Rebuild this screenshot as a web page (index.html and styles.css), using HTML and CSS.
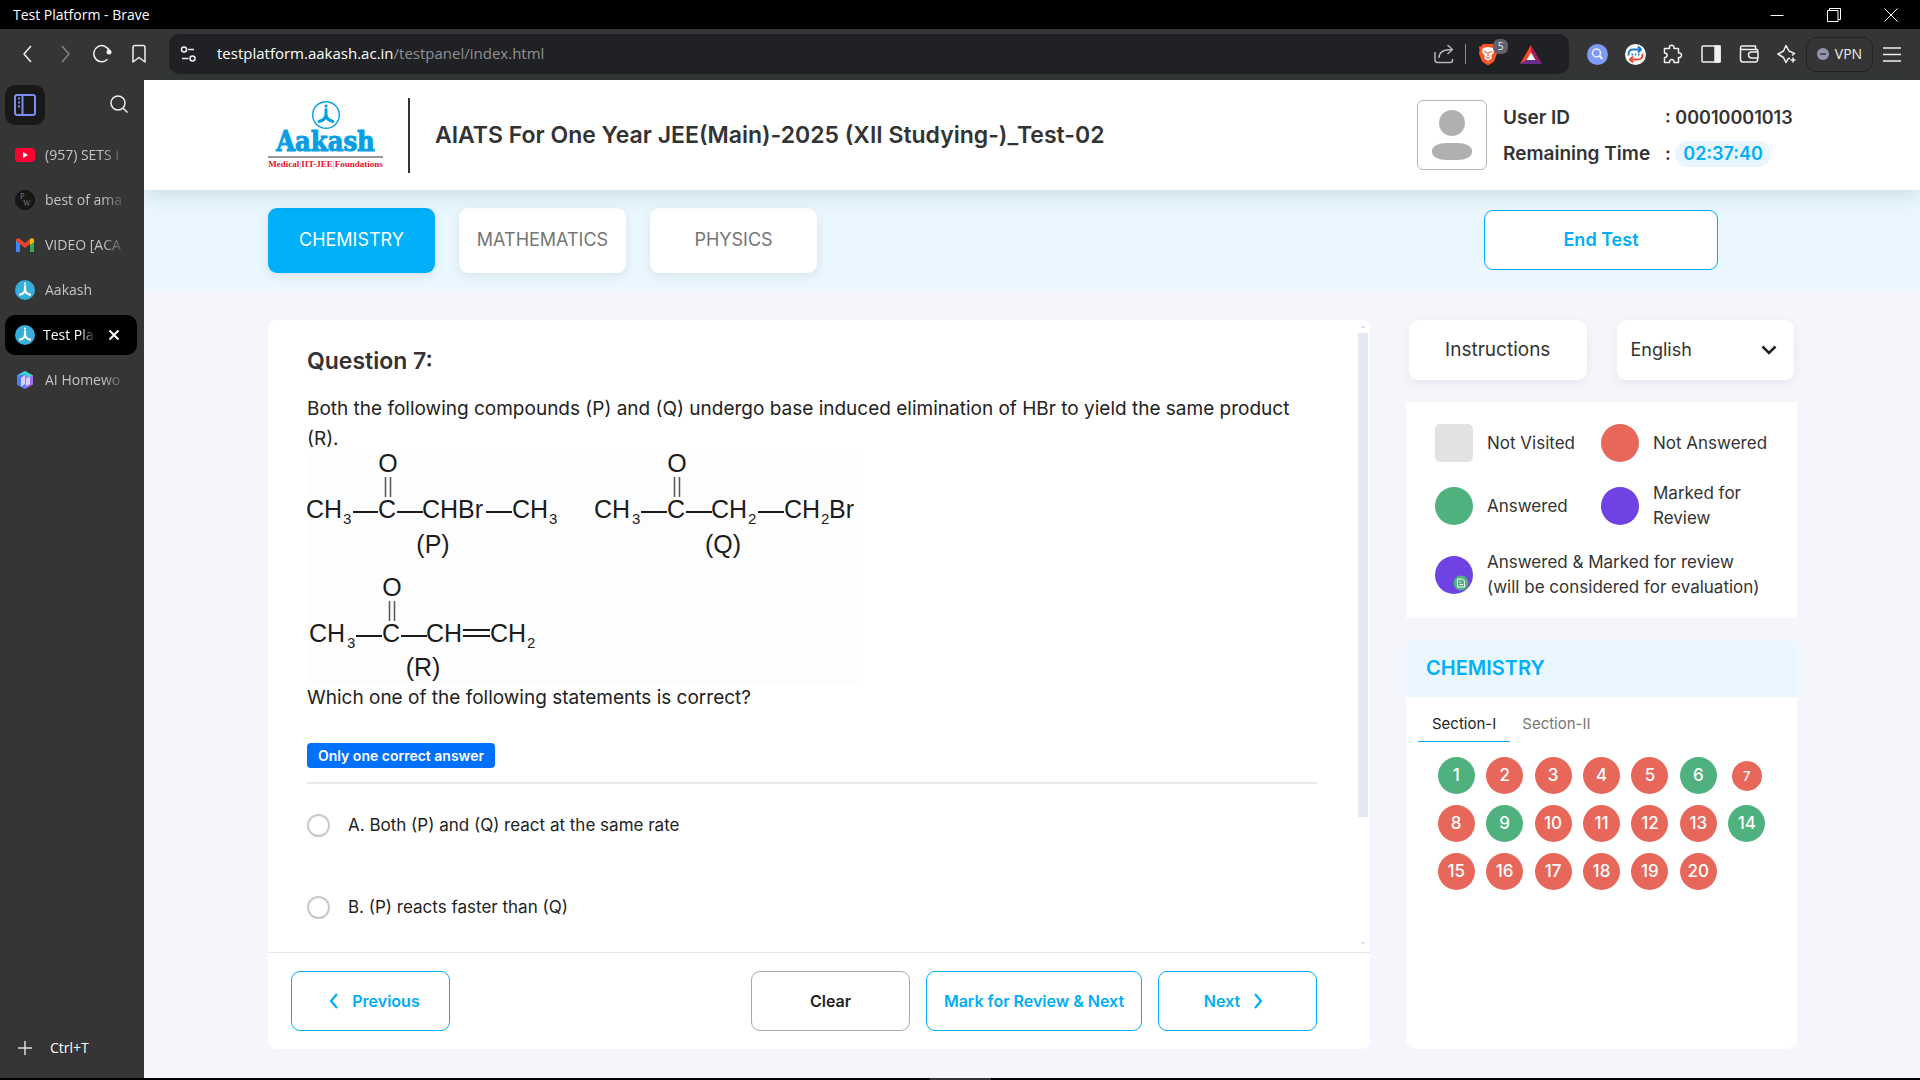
FILE: index.html
```html
<!DOCTYPE html>
<html lang="en">
<head>
<meta charset="utf-8">
<title>Test Platform</title>
<link rel="stylesheet" href="styles.css">
</head>
<body>
<svg class="defs" aria-hidden="true">
  <symbol id="figure" viewBox="0 0 28 28">
    <circle cx="14" cy="5" r="1.6" fill="currentColor"/>
    <path d="M14 8.500V14M14 13c0 4-3 6.500-7 7.500M14 13c0 4 3 6.500 7 7.500" fill="none" stroke="currentColor" stroke-width="3" stroke-linecap="round"/>
  </symbol>
</svg>

<div class="titlebar">
  <span class="window-title">Test Platform - Brave</span>
  <button class="win" aria-label="Minimize"><svg width="14" height="14" viewBox="0 0 14 14"><path d="M0.500 7.500h13"/></svg></button>
  <button class="win" aria-label="Restore"><svg width="14" height="14" viewBox="0 0 14 14"><path d="M0.500 2.500h10.500v11H0.500zM2.500 2.500v-2h11v11h-2"/></svg></button>
  <button class="win" aria-label="Close"><svg width="14" height="14" viewBox="0 0 14 14"><path d="M0.500 0.500l13 13M13.500 0.500l-13 13"/></svg></button>
</div>

<div class="toolbar">
  <div class="nav">
    <button class="tool" aria-label="Back"><svg width="20" height="20" viewBox="0 0 20 20"><path d="M13 2l-7 8 7 8"/></svg></button>
    <button class="tool dim" aria-label="Forward"><svg width="20" height="20" viewBox="0 0 20 20"><path d="M7 2l7 8-7 8"/></svg></button>
    <button class="tool" aria-label="Reload"><svg width="20" height="20" viewBox="0 0 20 20"><path d="M15.500 15.200A8 8 0 1 1 17.300 7"/><circle cx="17" cy="8" r="2.500" fill="currentColor" stroke="none"/></svg></button>
    <button class="tool" aria-label="Bookmark"><svg width="20" height="20" viewBox="0 0 20 20"><path d="M4 18V3.500C4 2 4.500 1.500 6 1.500h8c1.500 0 2 0.500 2 2V18l-6-4.500z"/></svg></button>
  </div>
  <div class="address">
    <button class="tool" aria-label="Site settings"><svg width="18" height="18" viewBox="0 0 18 18"><circle cx="5" cy="4.500" r="2.500"/><path d="M9 4.500h6M3 13.500h6.500"/><circle cx="13.500" cy="13.500" r="2.500"/></svg></button>
    <div class="url" role="textbox" aria-label="Address" contenteditable="true" spellcheck="false">testplatform.aakash.ac.in<span>/testpanel/index.html</span></div>
    <div class="address-tools">
      <button class="tool soft" aria-label="Share"><svg width="20" height="20" viewBox="0 0 20 20"><path d="M1 8v8c0 1.500 1 2.500 2.500 2.500h13c1 0 2-1 2-2V15M5 14c0-5 4-8.500 13-8.500M13.500 1l5 4.500-5 4.500"/></svg></button>
      <i class="bar"></i>
      <button class="tool shield" aria-label="Brave Shields"><svg width="20" height="23" viewBox="0 0 20 23"><path d="M5 1h10l2 2.500 2 0-0.500 4 0.500 3-3 8-6 4-6-4-3-8 0.500-3-0.500-4 2 0z" fill="#fb542b" stroke="none"/><path d="M5 5l5-1 5 1 1 4-3 4 1 2-4 3-4-3 1-2-3-4z" fill="#fff" stroke="none"/><path d="M6 8.500l3 1M14 8.500l-3 1M10 9v4M8 14l2 1 2-1" stroke="#fb542b" stroke-width="1.200"/></svg><span class="count">5</span></button>
      <button class="tool" aria-label="Rewards"><svg width="22" height="19" viewBox="0 0 22 19"><path d="M11 0L0 19l11-6z" fill="#ff4724" stroke="none"/><path d="M11 0l11 19-11-6z" fill="#9e1f63" stroke="none"/><path d="M0 19h22l-11-7z" fill="#662d91" stroke="none"/><path d="M11 7.500l4.500 7.500h-9z" fill="#fff" stroke="none"/></svg></button>
    </div>
  </div>
  <div class="extensions">
    <button class="tool" aria-label="Search extension"><svg width="21" height="21" viewBox="0 0 21 21"><circle cx="10.500" cy="10.500" r="10.500" fill="#7d9cf8" stroke="none"/><circle cx="9.500" cy="9" r="4"/><path d="M12.500 12l3 3" stroke-width="2"/></svg></button>
    <button class="tool" aria-label="Chat extension"><svg width="21" height="21" viewBox="0 0 21 21"><circle cx="10.500" cy="10.500" r="10.500" fill="#fff" stroke="none"/><path d="M3.500 11.500c-0.500-5 2-6 5-6h7M13 2.500l3 3-3 3" stroke="#1976d2" stroke-width="2"/><path d="M17.500 9.500c0.500 5-2 6-5 6h-7M8 12.500l-3 3 3 3" stroke="#f04a32" stroke-width="2"/><path d="M6.500 10.500h1.500M9.800 10.500h1.500M13 10.500h1.500" stroke="#1976d2" stroke-width="2"/></svg></button>
    <button class="tool" aria-label="Extensions"><svg width="20" height="20" viewBox="0 0 20 20"><path d="M1.500 4.500h5c-1.200-4.500 5.500-4.500 4.500 0h4.500V9c4-1 4 5.500 0 4.500v5H11c0.500-4-5-4-4.500 0h-5v-5c3.500 0 3.500-4.500 0-4.500z"/></svg></button>
    <button class="tool" aria-label="Side panel"><svg width="20" height="20" viewBox="0 0 20 20"><rect x="1" y="2" width="18" height="16" rx="1"/><path d="M14 2h5v16h-5z" fill="currentColor"/></svg></button>
    <button class="tool" aria-label="Wallet"><svg width="20" height="20" viewBox="0 0 20 20"><path d="M18.500 8V5.500H3C1 5.500 1 2 3 2h13.500v3M1.500 4v11.500c0 1.500 1 2.500 2.500 2.500h12.500c1.500 0 2-1 2-2v-2"/><path d="M19 8h-6.500a3 3 0 0 0 0 6H19z"/></svg></button>
    <button class="tool" aria-label="Leo"><svg width="20" height="20" viewBox="0 0 20 20"><path d="M13 14l-2 1-2 3.500-2.500-5L1 10l5.500-3L9 1.500 12 7l5.500 2.500-2.500 2M16 13.500v5M13.500 16h5"/></svg></button>
    <button class="vpn"><svg width="12" height="12" viewBox="0 0 12 12"><circle cx="6" cy="6" r="6" fill="#9494ac"/><path d="M3 6h6" stroke="#353535" stroke-width="1.500"/></svg>VPN</button>
    <button class="tool" aria-label="Menu"><svg width="20" height="20" viewBox="0 0 20 20"><path d="M1 4h18M1 10.500h18M1 17h18"/></svg></button>
  </div>
</div>

<div class="window">
  <nav class="tabs" aria-label="Browser tabs">
    <div class="tabs-head">
      <button class="panel" aria-label="Vertical tabs"><svg width="22" height="22" viewBox="0 0 22 22"><rect x="1" y="1" width="20" height="20" rx="2"/><path d="M8.500 1v20M4 4.500h2M4 8.500h2M4 12.500h2"/></svg></button>
      <button class="tool" aria-label="Search tabs"><svg width="18" height="18" viewBox="0 0 18 18"><circle cx="8" cy="8" r="7"/><path d="M13 13l4.500 4.500"/></svg></button>
    </div>
    <a class="tab" href="#"><svg width="20" height="20" viewBox="0 0 20 20"><rect y="3" width="20" height="14" rx="4" fill="#f03"/><path d="M8 7l5 3-5 3z" fill="#fff"/></svg><span>(957) SETS i</span></a>
    <a class="tab" href="#"><svg width="20" height="20" viewBox="0 0 20 20"><circle cx="10" cy="10" r="9.500" fill="#181818" stroke="#111"/><text x="5" y="9" class="fav">P</text><text x="8" y="16" class="fav">W</text></svg><span>best of ama</span></a>
    <a class="tab" href="#"><svg width="20" height="20" viewBox="0 0 20 20"><path d="M1 5v12h4V8z" fill="#4285f4"/><path d="M19 5v12h-4V8z" fill="#34a853"/><path d="M1 5.500c0-2.500 2-3 4-1.500l5 4 5-4v5l-5 4-5-4-4-3z" fill="#ea4335"/><path d="M15 4c2-1.500 4-1 4 1.500V7l-4 3z" fill="#fbbc04"/></svg><span>VIDEO [ACA</span></a>
    <a class="tab" href="#"><svg class="aak" width="20" height="20"><use href="#figure"/></svg><span>Aakash</span></a>
    <a class="tab active" href="#" aria-current="page"><svg class="aak" width="20" height="20"><use href="#figure"/></svg><span>Test Pla</span><svg class="x" width="20" height="20" viewBox="0 0 20 20"><path d="M5.500 5.500l9 9M14.500 5.500l-9 9"/></svg></a>
    <a class="tab" href="#"><svg width="20" height="20" viewBox="0 0 20 20"><path d="M10 1l8 4.500v9L10 19l-8-4.500v-9z" fill="#a66bf0"/><path d="M10 1v18l-8-4.500v-9z" fill="#4f7df5"/><path d="M10 1l8 4.500-5 2-3-3-8 1z" fill="#35d6d0"/><path d="M6 8l4-3v9l-4 3zM11 8l4-1v7l-4 2z" fill="#d9d0ff"/></svg><span>AI Homewo</span></a>
    <button class="newtab"><svg width="14" height="14" viewBox="0 0 14 14"><path d="M7 0v14M0 7h14"/></svg>Ctrl+T</button>
  </nav>

  <div class="page">
    <header class="header">
      <a class="logo" href="#" aria-label="Aakash">
        <svg class="logo-mark" width="28" height="28" viewBox="0 0 28 28"><circle cx="14" cy="14" r="13.300"/><use href="#figure"/></svg>
        <span class="logo-name">Aakash</span>
        <span class="logo-line">Medical<i>|</i>IIT-JEE<i>|</i>Foundations</span>
      </a>
      <h1>AIATS For One Year JEE(Main)-2025 (XII Studying-)_Test-02</h1>
      <div class="avatar"><svg width="40" height="50" viewBox="0 0 40 50"><circle cx="20" cy="13" r="13"/><rect x="0" y="33" width="40" height="17" rx="14" ry="8"/></svg></div>
      <dl class="user">
        <dt>User ID</dt><dd>: 00010001013</dd>
        <dt>Remaining Time</dt><dd>: <time>02:37:40</time></dd>
      </dl>
    </header>

    <div class="subjects">
      <button class="subject on">CHEMISTRY</button>
      <button class="subject">MATHEMATICS</button>
      <button class="subject">PHYSICS</button>
      <button class="btn end">End Test</button>
    </div>

    <main class="content">
      <section class="card">
        <div class="pane">
          <div class="question">
            <h2>Question 7:</h2>
            <p>Both the following compounds (P) and (Q) undergo base induced elimination of HBr to yield the same product (R).</p>
            <svg class="chem" width="551" height="229" viewBox="0 0 551 229" role="img" aria-label="Structures of P, Q and R">
              <text x="81" y="18" class="mid">O</text><text x="-1" y="64">CH</text><text x="36" y="70" class="sub">3</text><text x="71" y="64">C</text><text x="115" y="64">CHBr</text><text x="205" y="64">CH</text><text x="242" y="70" class="sub">3</text><text x="126" y="99" class="mid">(P)</text>
              <path d="M46 58h25M90 58h26M179 58h26"/><path class="thin" d="M78.500 23v20M83.500 23v20"/>
              <text x="370" y="18" class="mid">O</text><text x="287" y="64">CH</text><text x="325" y="70" class="sub">3</text><text x="360" y="64">C</text><text x="404" y="64">CH</text><text x="441" y="70" class="sub">2</text><text x="477" y="64">CH</text><text x="514" y="70" class="sub">2</text><text x="522" y="64">Br</text><text x="416" y="99" class="mid">(Q)</text>
              <path d="M334 58h26M379 58h26M451 58h26"/><path class="thin" d="M367.500 23v20M372.500 23v20"/>
              <text x="85" y="142" class="mid">O</text><text x="2" y="188">CH</text><text x="40" y="194" class="sub">3</text><text x="75" y="188">C</text><text x="119" y="188">CH</text><text x="183" y="188">CH</text><text x="220" y="194" class="sub">2</text><text x="116" y="222" class="mid">(R)</text>
              <path d="M49 182h26M94 182h26M156 176h27M156 182h27"/><path class="thin" d="M82.500 147v20M87.500 147v20"/>
            </svg>
            <p>Which one of the following statements is correct?</p>
            <span class="badge">Only one correct answer</span>
            <div class="options">
              <label><input type="radio" name="answer">A. Both (P) and (Q) react at the same rate</label>
              <label><input type="radio" name="answer">B. (P) reacts faster than (Q)</label>
            </div>
          </div>
          <div class="scroll"><i class="up"></i><i class="thumb"></i><i class="down"></i></div>
        </div>
        <footer class="actions">
          <button class="btn prev"><svg width="10" height="16" viewBox="0 0 10 16"><path d="M8 1L2 8l6 7"/></svg>Previous</button>
          <button class="btn clear">Clear</button>
          <button class="btn mark">Mark for Review &amp; Next</button>
          <button class="btn next">Next<svg width="10" height="16" viewBox="0 0 10 16"><path d="M2 1l6 7-6 7"/></svg></button>
        </footer>
      </section>

      <aside class="side">
        <div class="controls">
          <button class="control">Instructions</button>
          <div class="lang">
            <select class="control" aria-label="Language"><option>English</option></select>
            <svg width="16" height="10" viewBox="0 0 16 10"><path d="M1.500 1.500L8 8l6.500-6.500"/></svg>
          </div>
        </div>
        <ul class="legend">
          <li><i class="mark-box"></i>Not Visited</li>
          <li><i class="mark-box red"></i>Not Answered</li>
          <li><i class="mark-box green"></i>Answered</li>
          <li><i class="mark-box violet"></i>Marked for Review</li>
          <li class="wide"><i class="mark-box violet"><svg width="16" height="16" viewBox="0 0 16 16"><circle cx="8" cy="8" r="7.500" fill="#4fb27e"/><path d="M4.500 4h5l2 2v6h-7zM6.500 7h1.500M6.500 9.500h3.500" fill="none" stroke="#fff"/></svg></i><span>Answered &amp; Marked for review<br>(will be considered for evaluation)</span></li>
        </ul>
        <section class="palette">
          <h3>CHEMISTRY</h3>
          <div class="sections">
            <button class="on">Section-I</button>
            <button>Section-II</button>
          </div>
          <div class="numbers">
            <button class="green">1</button><button>2</button><button>3</button><button>4</button><button>5</button><button class="green">6</button><button class="current">7</button>
            <button>8</button><button class="green">9</button><button>10</button><button>11</button><button>12</button><button>13</button><button class="green">14</button>
            <button>15</button><button>16</button><button>17</button><button>18</button><button>19</button><button>20</button>
          </div>
        </section>
      </aside>
    </main>
  </div>
</div>
<div class="taskbar"><i></i></div>
</body>
</html>
```
FILE: styles.css
```css
* { box-sizing: border-box; }
body {
  margin: 0;
  height: 100vh;
  min-height: 1000px;
  display: flex;
  flex-direction: column;
  background: #353535;
  color: #fff;
  font: 15px/20px "Open Sans", "Noto Sans", sans-serif;
}
button, select { font: inherit; color: inherit; border: 0; padding: 0; background: none; cursor: pointer; }
a { color: inherit; text-decoration: none; }
svg { display: block; flex: none; }
h1, h2, h3, p, dl, dd, ul { margin: 0; padding: 0; }
.defs { position: absolute; width: 0; height: 0; }

/* Browser frame */
.titlebar { height: 29px; background: #000; display: flex; align-items: center; padding: 0 1px 0 13px; font-size: 14px; }
.window-title { flex: 1; }
.win { width: 57px; display: grid; place-items: center; }
.win svg { fill: none; stroke: #fff; }
.toolbar { height: 51px; display: flex; align-items: center; padding-bottom: 1px; }
.tool { position: relative; display: grid; place-items: center; width: 37px; height: 38px; color: #f0f0f0; }
.tool svg { fill: none; stroke: currentColor; stroke-width: 1.500; stroke-linejoin: round; }
.tool.dim { color: #858585; }
.tool.soft { color: #b5b5b5; }
.nav { display: flex; width: 169px; padding-left: 9px; }
.address { flex: 1; height: 40px; display: flex; align-items: center; background: #202124; border-radius: 10px; }
.url { flex: 1; padding: 0 0 2px 11px; outline: 0; }
.url span { color: #8f9194; }
.address-tools { display: flex; align-items: center; padding-right: 17px; }
.address-tools .tool { width: 43px; }
.bar { width: 1px; height: 20px; background: #8a8a8a; }
.count { position: absolute; top: 4px; right: 1px; width: 15px; height: 15px; border-radius: 6px; background: #60616d; font-size: 10px; line-height: 15px; text-align: center; }
.extensions { display: flex; align-items: center; padding: 0 9px; }
.extensions .tool { width: 38px; }
.vpn { display: flex; align-items: center; justify-content: center; gap: 6px; width: 67px; height: 35px; border: 1px solid #222; border-radius: 10px; font-size: 14px; color: #eee; }

.window { flex: 1; min-height: 0; display: flex; }
.tabs { width: 144px; flex: none; display: flex; flex-direction: column; gap: 5px; padding: 5px 7px 10px 5px; color: #c4c4c4; font-size: 14px; }
.tabs-head { display: flex; justify-content: space-between; margin-bottom: 5px; }
.panel { width: 40px; height: 40px; border-radius: 10px; background: #191919; display: grid; place-items: center; }
.panel svg { fill: none; stroke: #7b8cf5; stroke-width: 2; }
.tab { display: flex; align-items: center; gap: 10px; height: 40px; padding: 0 10px; border-radius: 10px; }
.tab span { flex: 1; white-space: nowrap; mask-image: linear-gradient(90deg, #000 70%, transparent); }
.tab.active { gap: 8px; padding-right: 13px; background: #000; color: #fff; }
.aak { border-radius: 50%; background: #35aeda; color: #fff; }
.x { stroke: #fff; stroke-width: 2; }
.fav { font: 8px "Liberation Serif", serif; fill: #777; }
.newtab { margin-top: auto; height: 40px; display: flex; align-items: center; gap: 18px; padding-left: 13px; color: #fff; }
.newtab svg { stroke: #ddd; stroke-width: 1.500; }
.taskbar { height: 2px; background: #000; }
.taskbar i { display: block; width: 61px; height: 2px; margin: 0 auto; background: #333; }

/* Test page */
.page { flex: 1; min-width: 0; display: flex; flex-direction: column; background: #f5f6fb; color: #333; font: 17px/30px Inter, "Liberation Sans", sans-serif; }
.header { position: relative; height: 110px; display: flex; align-items: center; padding: 0 123px 0 124px; background: #fff; box-shadow: 0 4px 20px rgba(0, 60, 60, 0.150); }
.logo { width: 115px; height: 68px; display: flex; flex-direction: column; align-items: center; }
.logo-mark { color: #069fe4; }
.logo-mark > circle { fill: none; stroke: #069fe4; stroke-width: 1.400; }
.logo-name { margin-bottom: 1px; font: bold 27px/26px "DejaVu Serif Condensed", "DejaVu Serif", serif; color: #069fe4; -webkit-text-stroke: 1px #069fe4; }
.logo-line { border-top: 2px solid #999; font: bold 9px/12px "Liberation Serif", serif; color: #e3142a; white-space: nowrap; }
.logo-line i { color: #777; font-style: normal; font-weight: normal; }
.header h1 { flex: 1; margin-left: 25px; padding-left: 25px; border-left: 2px solid #333; font-size: 23px; line-height: 75px; font-weight: 600; white-space: nowrap; }
.avatar { width: 70px; height: 70px; border: 1px solid #b8b8b8; border-radius: 6px; display: grid; place-items: center; }
.avatar svg { fill: #b0b0b0; }
.user { display: grid; grid-template-columns: 162px 132px; row-gap: 6px; margin-left: 16px; padding-top: 2px; font-size: 18px; font-weight: 600; white-space: nowrap; }
.user dt { font-size: 19px; }
.user time { display: inline-block; padding: 0 8px; line-height: 26px; border-radius: 13px; background: #e9f6ff; color: #00aef8; }

.subjects { height: 100px; display: flex; align-items: center; gap: 24px; padding: 0 202px 0 124px; background: #eaf7ff; }
.subject { width: 167px; height: 65px; border-radius: 9px; background: #fff; color: #757575; font-size: 18px; box-shadow: 0 3px 12px rgba(0, 0, 0, 0.080); }
.subject.on { background: #00b0f8; color: #fff; }
.btn { width: 159px; height: 60px; display: flex; align-items: center; justify-content: center; gap: 13px; border: 1px solid #00aef5; border-radius: 9px; background: #fff; color: #00aef5; font-size: 16px; font-weight: 600; white-space: nowrap; }
.btn svg { fill: none; stroke: currentColor; stroke-width: 2.200; }
.btn.end { width: 234px; margin-left: auto; font-size: 18px; }

.content { flex: 1; min-height: 0; display: flex; gap: 36px; padding: 30px 123px 29px 124px; }
.card { flex: 1; min-width: 0; display: flex; flex-direction: column; background: #fff; border-radius: 8px; }
.pane { flex: 1; min-height: 0; display: flex; overflow: hidden; }
.question { flex: 1; padding: 26px 41px 0 39px; }
.question h2 { font-size: 23px; line-height: 30px; font-weight: 600; margin-bottom: 18px; }
.question p { color: #222; font-size: 19px; }
.chem { display: block; background: #fdfdfd; font: 25px "Liberation Sans", sans-serif; fill: #1c1c1c; }
.chem path { stroke: #1c1c1c; stroke-width: 2; }
.chem .thin { stroke: #555; stroke-width: 1.500; }
.chem .sub { font-size: 15px; }
.chem .mid { text-anchor: middle; }
.badge { display: block; width: fit-content; margin-top: 30px; padding: 0 11px; border-radius: 4px; background: #0070ff; color: #fff; font-size: 14px; line-height: 25px; font-weight: 600; }
.options { margin-top: 14px; padding-top: 26px; border-top: 2px solid #ebebeb; display: grid; gap: 52px; color: #222; font-size: 17px; }
.options label { display: flex; align-items: center; gap: 18px; }
.options input { appearance: none; width: 23px; height: 23px; margin: 0; border: 2px solid #c9c9c9; border-radius: 50%; background: #fff; }
.scroll { width: 12px; padding: 5px 2px 7px 0; display: flex; flex-direction: column; }
.scroll .thumb { flex: none; height: 78%; margin-top: 5px; background: #e4e8f2; }
.up, .down { border: 3px solid transparent; align-self: center; }
.up { border-top: 0; border-bottom-color: #dfe5f0; }
.down { border-bottom: 0; border-top-color: #dfe5f0; margin-top: auto; }
.actions { display: flex; gap: 16px; padding: 18px 53px 18px 23px; border-top: 1px solid #e8e8e8; }
.prev { margin-right: auto; padding-left: 8px; }
.next { padding-right: 8px; }
.clear { border-color: #aaa; color: #222; }
.mark { width: 216px; }

.side { width: 391px; flex: none; display: flex; flex-direction: column; }
.controls { display: grid; grid-template-columns: 1fr 1fr; gap: 30px; padding: 0 3px; margin-bottom: 22px; }
.control { width: 100%; height: 60px; border-radius: 9px; background: #fff; font-size: 19px; box-shadow: 0 3px 12px rgba(0, 0, 0, 0.060); }
.lang { position: relative; }
select.control { appearance: none; padding: 0 14px; font-size: 18px; }
.lang svg { position: absolute; right: 17px; top: 25px; fill: none; stroke: #222; stroke-width: 2.500; pointer-events: none; }
.legend { list-style: none; display: grid; grid-template-columns: 150px 1fr; column-gap: 16px; row-gap: 13px; padding: 16px 20px 12px 29px; margin-bottom: 22px; background: #fff; font-size: 17px; line-height: 25px; }
.legend li { display: flex; align-items: center; gap: 14px; min-height: 50px; }
.legend .wide { grid-column: 1 / -1; min-height: 62px; font-size: 16px; white-space: nowrap; }
.mark-box { position: relative; flex: none; width: 38px; height: 38px; border-radius: 5px; background: #e2e2e2; }
.mark-box.red, .mark-box.green, .mark-box.violet { border-radius: 50%; }
.mark-box svg { position: absolute; right: 4px; bottom: 3px; }
.mark-box.red { background: #e7685a; }
.mark-box.green { background: #4fb27e; }
.mark-box.violet { background: #6f42e3; }
.legend .wide { font-size: 17px; }
.palette { flex: 1; background: #fff; border-radius: 10px; overflow: hidden; }
.palette h3 { padding: 13px 20px 14px; background: #eaf7ff; color: #00b0f8; font-size: 20px; line-height: 30px; font-weight: 600; }
.sections { display: flex; padding: 10px 12px 15px; font-size: 15px; color: #757575; }
.sections button { height: 35px; padding: 0 12px; border-bottom: 1px solid transparent; }
.sections .on { padding: 0 14px; border-color: #00aef5; color: #222; }
.numbers { display: grid; grid-template-columns: repeat(7, 1fr); row-gap: 11px; padding: 0 26px; place-items: center; }
.numbers button { width: 37px; height: 37px; border-radius: 50%; background: #e7685a; color: #fff; font-size: 17px; line-height: 37px; font-weight: 500; }
.numbers .green { background: #4fb27e; }
.numbers .current { width: 30px; height: 30px; font-size: 13px; line-height: 30px; }
```
